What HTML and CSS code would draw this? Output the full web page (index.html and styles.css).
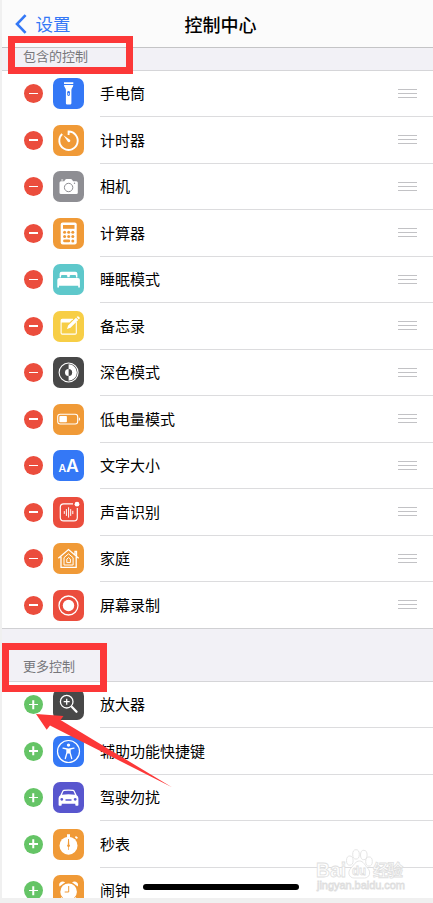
FILE: index.html
```html
<!DOCTYPE html>
<html lang="zh-CN">
<head>
<meta charset="utf-8">
<title>控制中心</title>
<link rel="stylesheet" href="styles.css">
</head>
<body>
<main class="phone">
  <header class="nav">
    <a class="back"><svg class="chevron" viewBox="0 0 12 20"><path d="M10.600 1.200 2 10l8.600 8.800"/></svg>设置</a>
    <h1 class="title">控制中心</h1>
  </header>

  <h2 class="section section-first"><span>包含的控制</span></h2>
  <ul class="list">
    <li class="row"><i class="toggle minus"></i>
      <svg class="icon blue" viewBox="0 0 31 31"><path class="f" d="M11 4.300h9.300v1.700H11zM11 7h9.300c0 2.200-1.900 3-1.900 5v13.200q0 1.300-1.300 1.300h-2.900q-1.300 0-1.300-1.300V12c0-2-1.900-2.800-1.900-5z"/><rect x="14.200" y="13" width="2.800" height="5" rx="1.400" fill="#3478f6"/><circle class="f" cx="15.600" cy="16" r=".8"/></svg>
      <div class="label">手电筒<b class="grip"></b></div></li>
    <li class="row"><i class="toggle minus"></i>
      <svg class="icon orange" viewBox="0 0 31 31"><path class="s" stroke-width="1.900" d="M15.600 10V6.500a9.200 9.200 0 1 1-6.400 2.500"/><path class="f" d="m10.400 10.300 6.500 4.400a1.400 1.400 0 0 1-2 2z"/></svg>
      <div class="label">计时器<b class="grip"></b></div></li>
    <li class="row"><i class="toggle minus"></i>
      <svg class="icon gray" viewBox="0 0 31 31"><path class="f" d="M8 10.200h3.200l1-1.400q.5-.7 1.300-.7h4.300q.8 0 1.300.7l1 1.400h3.200q1.500 0 1.500 1.500v10q0 1.300-1.500 1.300H8q-1.500 0-1.500-1.300v-10q0-1.500 1.500-1.500zM8.200 8.500h2v1h-2z"/><circle cx="15.600" cy="16.500" r="4.200" fill="none" stroke="#8e8e93"/><circle cx="21.500" cy="12.300" r=".7" fill="#8e8e93"/></svg>
      <div class="label">相机<b class="grip"></b></div></li>
    <li class="row"><i class="toggle minus"></i>
      <svg class="icon orange" viewBox="0 0 31 31"><rect class="f" x="7.700" y="4.600" width="16" height="22" rx="2"/><g fill="#f09a37"><rect x="10" y="7" width="11.500" height="3.800"/><circle cx="11.600" cy="14.300" r="1.500"/><circle cx="15.700" cy="14.300" r="1.500"/><circle cx="19.800" cy="14.300" r="1.500"/><circle cx="11.600" cy="18.600" r="1.500"/><circle cx="15.700" cy="18.600" r="1.500"/><circle cx="19.800" cy="18.600" r="1.500"/><rect x="10.100" y="21.500" width="7.100" height="2.800" rx="1.400"/><circle cx="19.800" cy="22.900" r="1.500"/></g></svg>
      <div class="label">计算器<b class="grip"></b></div></li>
    <li class="row"><i class="toggle minus"></i>
      <svg class="icon teal" viewBox="0 0 31 31"><path class="f" d="M6.600 13.500V9.700q0-2 2-2h13.800q2 0 2 2v3.800H23V12q0-1-1-1h-4.300q-1 0-1 1v1.200h-2.400V12q0-1-1-1H9q-1 0-1 1v1.500zM6.300 14h18.600q2 0 2 2v7.600h-1.700v-1.800H6v1.800H4.300V16q0-2 2-2z"/></svg>
      <div class="label">睡眠模式<b class="grip"></b></div></li>
    <li class="row"><i class="toggle minus"></i>
      <svg class="icon yellow" viewBox="0 0 31 31"><path class="s" stroke-width="1.100" d="M20 8.300H9.300q-1.200 0-1.200 1.200v12.400q0 1.200 1.200 1.200h12.800q1.200 0 1.200-1.200v-11"/><path class="f" d="M8 8h12l-3.500 3.500H8zM14 18l1.100-3.600L23 6.700l2.300 2.300-7.800 7.800zM23.600 6.100l.8-.7q.5-.5 1 0l1.200 1.200q.5.500 0 1l-.7.800z"/></svg>
      <div class="label">备忘录<b class="grip"></b></div></li>
    <li class="row"><i class="toggle minus"></i>
      <svg class="icon dark" viewBox="0 0 31 31"><circle class="s" cx="15.600" cy="15.500" r="9.500" stroke-width="1.100"/><path class="f" d="M15.600 7.200a8.300 8.300 0 0 1 0 16.600v-4.700a3.600 3.600 0 0 0 0-7.200z"/><path class="f" d="M15.600 11.900a3.600 3.600 0 0 0 0 7.200z"/></svg>
      <div class="label">深色模式<b class="grip"></b></div></li>
    <li class="row"><i class="toggle minus"></i>
      <svg class="icon orange" viewBox="0 0 31 31"><rect class="s" x="4.700" y="10.200" width="20" height="9.800" rx="2.500" stroke-width="1.100"/><rect class="f" x="6.400" y="12" width="7.500" height="6.300" rx=".8"/><path class="f" d="M25.800 13.300q1.300.4 1.300 1.800t-1.300 1.800z"/></svg>
      <div class="label">低电量模式<b class="grip"></b></div></li>
    <li class="row"><i class="toggle minus"></i>
      <svg class="icon blue" viewBox="0 0 31 31"><text class="glyph" x="5.500" y="21.500" font-size="10.500">A</text><text class="glyph" x="13" y="21.500" font-size="17.500">A</text></svg>
      <div class="label">文字大小<b class="grip"></b></div></li>
    <li class="row"><i class="toggle minus"></i>
      <svg class="icon red" viewBox="0 0 31 31"><path class="s" stroke-width="1.200" d="M20 6.800h-9.300q-3.400 0-3.400 3.400v10.200q0 3.400 3.400 3.400h10.200q3.400 0 3.400-3.400V11"/><path class="s" stroke-width="1" stroke-linecap="round" d="M11.300 14.500v2M13.400 12.500v6M15.600 10.700v9.500M17.700 12.500v6M19.800 14.200v2.500"/><circle class="f" cx="24" cy="7.200" r="2.400"/></svg>
      <div class="label">声音识别<b class="grip"></b></div></li>
    <li class="row"><i class="toggle minus"></i>
      <svg class="icon orange" viewBox="0 0 31 31"><path class="s" stroke-width="1.300" d="M5.300 15.300 15.500 6.600l10.200 8.700M22 12V8.300h1.500v5M8 13.800v10.600h15.200V13.800"/><path class="s" stroke-width="1" d="M11 22V14.700l4.500-3.900 4.600 3.900V22zM13.800 19.600v-3.500l1.800-1.500 1.800 1.500v3.500z"/></svg>
      <div class="label">家庭<b class="grip"></b></div></li>
    <li class="row"><i class="toggle minus"></i>
      <svg class="icon red" viewBox="0 0 31 31"><circle class="s" cx="15.500" cy="15.500" r="9.500" stroke-width="1.300"/><circle class="f" cx="15.500" cy="15.500" r="5.700"/></svg>
      <div class="label">屏幕录制<b class="grip"></b></div></li>
  </ul>

  <h2 class="section section-more"><span>更多控制</span></h2>
  <ul class="list">
    <li class="row"><i class="toggle plus"></i>
      <svg class="icon dark" viewBox="0 0 31 31"><circle class="s" cx="13.700" cy="12.700" r="6.300" stroke-width="1.300"/><path class="s" stroke-width="1.300" d="M10.700 12.700h6M13.700 9.700v6"/><path class="s" stroke-width="2.300" stroke-linecap="round" d="m19 18 4.500 4.700"/></svg>
      <div class="label">放大器</div></li>
    <li class="row"><i class="toggle plus"></i>
      <svg class="icon blue" viewBox="0 0 31 31"><circle class="s" cx="15.500" cy="15.500" r="11" stroke-width="1.200"/><circle class="f" cx="15.500" cy="9.100" r="1.700"/><path class="s" stroke-width="1.300" stroke-linecap="round" stroke-linejoin="round" d="m10 12.200 4 .8v3.500l-1.700 6M21 12.200l-4 .8v3.500l1.700 6"/><path class="f" d="M13.800 12.500h3.400v5h-3.400z"/></svg>
      <div class="label">辅助功能快捷键</div></li>
    <li class="row"><i class="toggle plus"></i>
      <svg class="icon purple" viewBox="0 0 31 31"><path class="f" fill-rule="evenodd" d="m7.300 13.300 2-4.400Q9.700 8 10.700 7.800q4.800-.7 9.600 0 1 .2 1.400 1.100l2 4.400q1.700 1 1.700 3V23q0 .8-.8.800h-1.500q-.8 0-.8-.8v-1.200H8.700V23q0 .8-.8.800H6.400q-.8 0-.8-.8v-6.700q0-2 1.700-3zM9 12.700q6.500-.8 13 0l-1.400-3.200q-.2-.4-.7-.5-4.400-.6-8.800 0-.5.100-.7.500zM8.800 15.900a1.400 1.400 0 1 0 .01 0zM22.200 15.900a1.400 1.400 0 1 0 .01 0zM12.500 17.200v1.500h6v-1.500z"/></svg>
      <div class="label">驾驶勿扰</div></li>
    <li class="row"><i class="toggle plus"></i>
      <svg class="icon orange" viewBox="0 0 31 31"><circle class="f" cx="15.500" cy="16.700" r="9"/><path class="f" d="M14 5.300h3V8h-3zM21.800 8.200l1.200-1.300 2 1.900-1.200 1.200z"/><path d="M15.100 10h.9l.3 5.500a1.400 1.400 0 1 1-1.500 0z" fill="#f09a37"/><path d="M15.500 18v3" stroke="#f09a37" stroke-width=".7"/></svg>
      <div class="label">秒表</div></li>
    <li class="row"><i class="toggle plus"></i>
      <svg class="icon orange" viewBox="0 0 31 31"><circle class="f" cx="15.600" cy="16.700" r="8.300"/><path class="f" d="M6.500 11.500q-1-2.500.7-4 2.200-1.800 5-.2zM24.700 11.500q1-2.500-.7-4-2.200-1.800-5-.2zM8.500 22l1.600 1.600-1.900 2-1.200-1.200zM22.700 22l-1.600 1.600 1.900 2 1.200-1.200z"/><path d="M15.700 11v6h-4" fill="none" stroke="#f09a37" stroke-width="1"/></svg>
      <div class="label">闹钟</div></li>
  </ul>

  <div class="home-bar"></div>
</main>

<div class="mark mark-first"></div>
<div class="mark mark-more"></div>
<svg class="arrow" viewBox="0 0 140 78"><path d="M2 3 29.500 5 26.500 9 138 76.300 16 14.500 12.700 18.700z"/></svg>
<svg class="watermark" viewBox="0 0 96 46">
  <text x="3" y="29" font-size="20" font-weight="700" textLength="30" lengthAdjust="spacingAndGlyphs">Bai</text>
  <g><ellipse cx="36.800" cy="12.600" rx="3.300" ry="4.600"/><ellipse cx="43" cy="6.400" rx="3.300" ry="4.700"/><ellipse cx="50.800" cy="7" rx="3.300" ry="4.700"/><ellipse cx="56" cy="13.500" rx="3.300" ry="4.600"/><path d="M46.500 13c4 0 5 4 8 7 4 4 2 10-3 10H41c-5 0-7-6-3-10 3-3 4.500-7 8.500-7z"/></g>
  <text x="39" y="27" font-size="13" font-weight="700" textLength="14" lengthAdjust="spacingAndGlyphs">du</text>
  <text x="60" y="27.500" font-size="15.500" font-weight="700" textLength="30">经验</text>
  <text x="4" y="40.500" font-size="11" textLength="88">jingyan.baidu.com</text>
</svg>
</body>
</html>
```
FILE: styles.css
```css
* { box-sizing: border-box; }

body {
  margin: 0;
  width: 433px;
  height: 903px;
  overflow: hidden;
  position: relative;
  background: #f0f0f0;
  color: #000;
  font-family: "Noto Sans CJK SC", sans-serif;
}

.phone {
  position: relative;
  height: 898px;
  margin-left: 2px;
  overflow: hidden;
  background: #fff;
}

.nav {
  display: grid;
  grid-template-columns: 1fr auto 1fr;
  align-items: center;
  height: 48px;
  padding-left: 13px;
  background: #fbfbfb;
  border-bottom: 1px solid #c4c4c6;
}

.back {
  display: flex;
  align-items: center;
  gap: 8.5px;
  color: #3478f6;
  font-size: 17.5px;
  line-height: 26px;
}

.chevron {
  width: 12px;
  height: 20px;
  fill: none;
  stroke: #3478f6;
  stroke-width: 2.6;
}

.title {
  margin: 0 7px 0 0;
  font-size: 18px;
  font-weight: 500;
  line-height: 26px;
}

.section {
  display: flex;
  margin: 0;
  padding-left: 21px;
  background: #f2f1f6;
  border-bottom: 1px solid #d5d5d8;
  color: #77777b;
  font-size: 13px;
  font-weight: 400;
  line-height: 18px;
}

.section-first { height: 22.9px; line-height: 16px; }
.section-more { height: 53px; padding-top: 28px; }

.list {
  margin: 0;
  padding: 0;
  list-style: none;
}

.row {
  display: flex;
  align-items: center;
  height: 46.5px;
  padding-left: 22px;
}

.toggle {
  position: relative;
  flex: none;
  width: 19px;
  height: 19px;
  margin: 0 10px 1px 0;
  border-radius: 50%;
}

.minus { background: #eb4d3d; }
.plus { background: #65c466; }

.toggle::before,
.plus::after {
  content: "";
  position: absolute;
  left: 5px;
  top: 8.75px;
  width: 9px;
  height: 1.5px;
  background: #fff;
}

.plus::after { transform: rotate(90deg); }

.icon {
  flex: none;
  width: 31px;
  height: 31px;
  margin: 0 16px 1px 0;
  border-radius: 7px;
}

.blue { background: #3478f6; }
.orange { background: #f09a37; }
.gray { background: #8e8e93; }
.teal { background: #5ec8cb; }
.yellow { background: #f7ce46; }
.dark { background: #484848; }
.red { background: #eb4d3d; }
.purple { background: #5856ce; }

.icon .f { fill: #fff; }
.icon .s { fill: none; stroke: #fff; }
.glyph {
  fill: #fff;
  font-family: Inter, sans-serif;
  font-weight: 600;
}

.label {
  flex: 1;
  align-self: stretch;
  display: flex;
  align-items: center;
  justify-content: space-between;
  padding: 0 16px 0.6px 0;
  border-bottom: 1px solid #dcdcde;
  font-size: 15px;
  line-height: 22px;
}

.row:last-child { border-bottom: 1px solid #d0d0d3; }
.row:last-child .label { border-bottom: 0; }
.row:last-child .icon,
.row:last-child .toggle { margin-bottom: 0; }

.grip {
  width: 19px;
  height: 9px;
  border-top: 1px solid #c2c2c5;
  border-bottom: 1px solid #c2c2c5;
  background: linear-gradient(#c2c2c5, #c2c2c5) 0 3px / 100% 1px no-repeat;
}

.home-bar {
  position: absolute;
  left: 141px;
  top: 884px;
  width: 156px;
  height: 5.5px;
  border-radius: 3px;
  background: #000;
}

.mark {
  position: absolute;
  border: 7px solid #fc3838;
}

.mark-first { left: 8px; top: 36px; width: 125px; height: 38px; }
.mark-more { left: 2px; top: 643px; width: 105px; height: 49px; }

.arrow {
  position: absolute;
  left: 34px;
  top: 711px;
  width: 140px;
  height: 78px;
  fill: #fc3838;
}

.watermark {
  position: absolute;
  left: 313px;
  top: 848px;
  width: 96px;
  height: 46px;
  fill: #fff;
  stroke: #dedede;
  stroke-width: 0.8;
  font-family: "Liberation Sans", "Noto Sans CJK SC", sans-serif;
}
```
